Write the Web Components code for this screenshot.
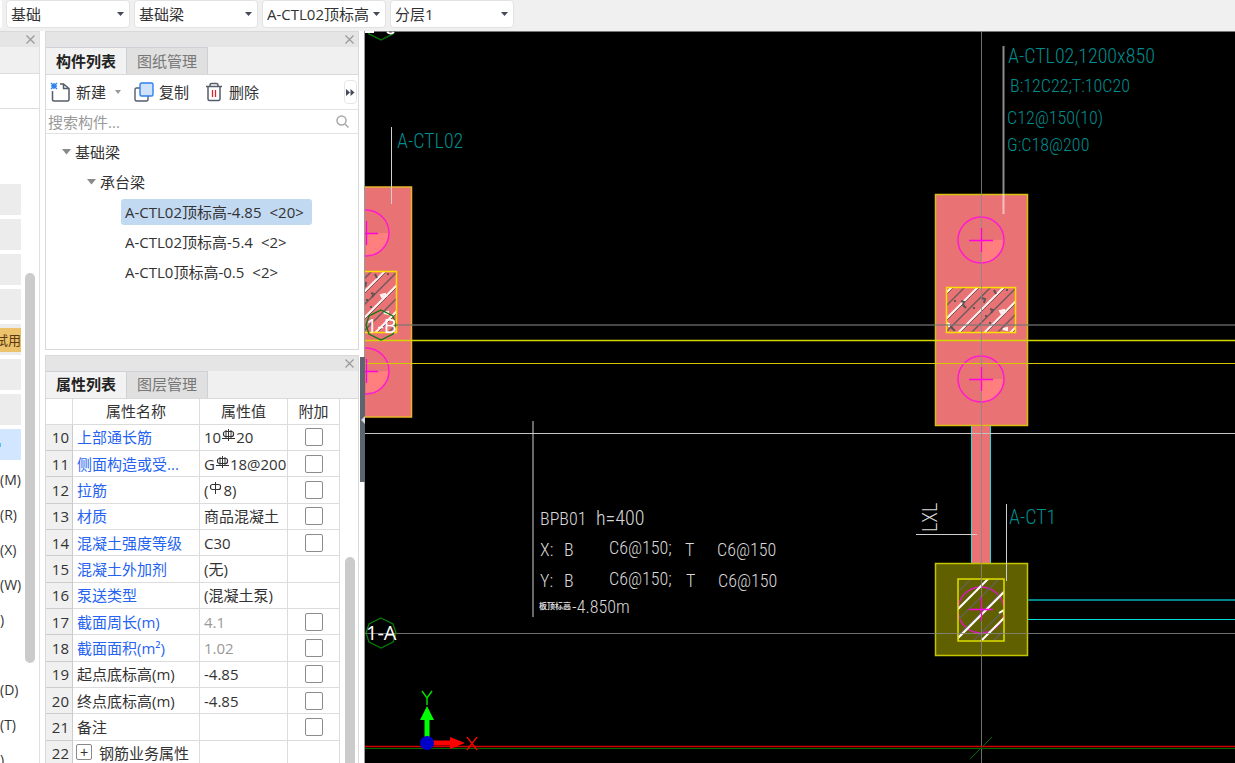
<!DOCTYPE html>
<html lang="zh-CN">
<head>
<meta charset="utf-8">
<title>基础梁</title>
<style>
  html, body { height: 100%; margin: 0; }
  body {
    font-family: "Open Sans", "Noto Sans CJK SC", sans-serif;
    font-size: 15px;
    line-height: 20px;
    color: #333;
    background: #fff;
    overflow: hidden;
  }
</style>
</head>
<body>
<modeling-app></modeling-app>

<script>
class PickList extends HTMLElement {
  constructor() {
    super();
    this.attachShadow({ mode: "open" });
  }

  connectedCallback() {
    const label = this.getAttribute("label") || "";
    const value = this.getAttribute("value") || "";
    this.shadowRoot.innerHTML = `
      <style>
        :host { display: grid; width: 124px; height: 28px; }
        select, svg { grid-area: 1 / 1; }
        select {
          appearance: none; width: 100%; margin: 0; padding: 0 14px 0 4px;
          font: inherit; color: inherit; background: #fff;
          border: 1px solid #e2e2e2; border-radius: 4px;
        }
        svg { justify-self: end; align-self: center; margin-right: 6px; pointer-events: none; }
      </style>
      <select aria-label="${label}"><option>${value}</option></select>
      <svg width="7" height="4" viewBox="0 0 7 4"><path d="M0 0h7L3.5 4z" fill="#444b57"/></svg>
    `;
  }
}

class TopBar extends HTMLElement {
  constructor() {
    super();
    this.attachShadow({ mode: "open" });
    this.shadowRoot.innerHTML = `
      <style>
        :host { display: flex; gap: 4px; height: 31px; background: #f0f0f0; }
        .stub { width: 2px; height: 28px; background: #fff; border-radius: 0 4px 4px 0; }
      </style>
      <div class="stub"></div>
      <pick-list label="构件类别" value="基础"></pick-list>
      <pick-list label="构件类型" value="基础梁"></pick-list>
      <pick-list label="构件" value="A-CTL02顶标高"></pick-list>
      <pick-list label="分层" value="分层1"></pick-list>
    `;
  }
}

// Grey strip with the close cross that tops every docked panel
class PanelStrip extends HTMLElement {
  constructor() {
    super();
    this.attachShadow({ mode: "open" });
    this.shadowRoot.innerHTML = `
      <style>
        :host { display: flex; flex: none; justify-content: flex-end; align-items: center; height: 15px; background: #e5e5e5; border-top: 1px solid #d9d9d9; }
        button { display: flex; padding: 0; margin-right: 4px; border: 0; background: none; }
      </style>
      <button type="button" aria-label="关闭"><svg width="9" height="9" viewBox="0 0 9 9"><path d="M.5.5l8 8M8.5.5l-8 8" stroke="#999" stroke-width="1.2"/></svg></button>
    `;
  }
}

class SideNav extends HTMLElement {
  constructor() {
    super();
    this.attachShadow({ mode: "open" });
    const tails = ["(M)", "(R)", "(X)", "(W)", ")", "", "(D)", "(T)", ")"];
    this.shadowRoot.innerHTML = `
      <style>
        :host { display: flex; flex-direction: column; flex: none; width: 39px; border-right: 1px solid #e0e0e0; overflow: hidden; }
        .head { flex: none; height: 26px; background: #f0f0f0; border-bottom: 1px solid #ddd; }
        .blank { flex: none; height: 34px; border-bottom: 1px solid #ddd; }
        .body { flex: 1; display: flex; min-height: 0; }
        ul { width: 21px; flex: none; margin: 0; padding: 75px 0 0; list-style: none; overflow: hidden; font-size: 14px; }
        li { display: flex; align-items: center; height: 31px; margin-bottom: 4px; white-space: nowrap; }
        .bar { background: #ececec; }
        .active { background: #d3e6ff; }
        .active i { width: 1px; height: 4px; background: #4fc3f7; }
        .trial { justify-content: flex-end; width: 100%; height: 24px; line-height: 24px; background: #edc26c; color: #5a3b10; display: flex; font-size: 13px; }
        .thumb { width: 10px; height: 390px; margin: 164px 0 0 4px; border-radius: 5px; background: #cbcbcb; }
      </style>
      <panel-strip></panel-strip>
      <div class="head"></div>
      <div class="blank"></div>
      <div class="body">
        <ul>
          <li class="bar"></li><li class="bar"></li><li class="bar"></li><li class="bar"></li>
          <li class="bar"><span class="trial">试用</span></li>
          <li class="bar"></li><li class="bar"></li>
          <li class="active"><i></i></li>
          ${tails.map((t) => `<li>${t}</li>`).join("")}
        </ul>
        <div class="thumb"></div>
      </div>
    `;
  }
}

class DockPanel extends HTMLElement {
  constructor() {
    super();
    this.attachShadow({ mode: "open" });
  }

  connectedCallback() {
    const [first, second] = (this.getAttribute("tabs") || "").split(",");
    this.shadowRoot.innerHTML = `
      <style>
        :host { display: flex; flex-direction: column; min-height: 0; box-sizing: border-box; border: 1px solid #d9d9d9; border-top: 0; }
        .tabs { display: flex; flex: none; height: 27px; background: #f0f0f0; border-bottom: 1px solid #d9d9d9; }
        button {
          width: 81px; padding: 0 0 1px; font: inherit; color: #777; background: #e0e0e0;
          border: 0; border-top: 1px solid #cdd1d6; border-right: 1px solid #cdd1d6;
        }
        button[aria-selected="true"] { color: #222; font-weight: 600; background: #f2f2f2; }
        .body { display: flex; flex-direction: column; flex: 1; min-height: 0; overflow: hidden; }
      </style>
      <panel-strip></panel-strip>
      <div class="tabs" role="tablist">
        <button type="button" role="tab" aria-selected="true">${first}</button>
        <button type="button" role="tab" aria-selected="false">${second}</button>
      </div>
      <div class="body"><slot></slot></div>
    `;
  }
}

class ComponentList extends HTMLElement {
  constructor() {
    super();
    this.attachShadow({ mode: "open" });
    const caret = `<svg width="9" height="6" viewBox="0 0 9 6"><path d="M0 0h9L4.500 5.500z" fill="#8a8a8a"/></svg>`;
    const leaves = [
      ["A-CTL02顶标高-4.85", "&lt;20&gt;"],
      ["A-CTL02顶标高-5.4", "&lt;2&gt;"],
      ["A-CTL0顶标高-0.5", "&lt;2&gt;"],
    ];
    this.shadowRoot.innerHTML = `
      <style>
        :host { display: flex; flex-direction: column; flex: 1; min-height: 0; }
        .tools { display: flex; align-items: center; flex: none; height: 34px; padding: 0 1px 0 4px; border-bottom: 1px solid #e2e2e2; }
        .tools button { display: flex; align-items: center; gap: 5px; padding: 0; border: 0; background: none; font: inherit; color: inherit; }
        .tools .copy { margin: 0 16px 0 13px; }
        .tools .del { gap: 6px; }
        .tools .new svg:last-child { margin-left: 4px; }
        .tools .more { justify-content: center; width: 13px; height: 24px; margin-left: auto; border: 1px solid #e6e6e6; border-radius: 4px; }
        label { display: flex; align-items: center; flex: none; height: 23px; padding: 0 9px 0 2px; border-bottom: 1px solid #e2e2e2; }
        input { flex: 1; min-width: 0; padding: 0; border: 0; outline: 0; font: inherit; color: inherit; }
        input::placeholder { color: #999; opacity: 1; }
        ul { margin: 0; padding: 0; list-style: none; }
        .tree { padding: 3px 0 0 16px; }
        .node { display: flex; align-items: center; gap: 4px; height: 30px; }
        .kids { padding-left: 25px; }
        .leaves { padding-left: 34px; }
        .leaf { display: flex; align-items: center; height: 30px; }
        .leaf span { display: flex; gap: 8px; padding: 3px 8px 3px 4px; border-radius: 3px; }
        .picked span { background: #c2d9f2; }
      </style>
      <div class="tools">
        <button type="button" class="new">
          <svg width="21" height="20" viewBox="0 0 21 20" fill="none">
            <path d="M2.500 9v8.500q0 1.500 1.500 1.500h13.500q1.500 0 1.500-1.500V6.500L13.500 2H10M13.500 2v4.500H19" stroke="#555d6b" stroke-width="1.500"/>
            <path d="M1 1l6 6M7 1L1 7M4 1v6M1 4h6" stroke="#2f86ee" stroke-width="1.400"/>
          </svg>新建
          <svg width="6" height="4" viewBox="0 0 6 4"><path d="M0 0h6L3 4z" fill="#999"/></svg>
        </button>
        <button type="button" class="copy">
          <svg width="20" height="20" viewBox="0 0 20 20">
            <path d="M6 6H2.500Q1 6 1 7.500v10Q1 19 2.500 19h10q1.500 0 1.500-1.500V14" fill="none" stroke="#555d6b" stroke-width="1.400"/>
            <rect x="6" y="1" width="13" height="13" rx="1.500" fill="#cfe2fb" stroke="#2f80ed" stroke-width="1.400"/>
          </svg>复制
        </button>
        <button type="button" class="del">
          <svg width="18" height="20" viewBox="0 0 18 20" fill="none">
            <path d="M1 4.500h16M5 4.500V3q0-1.500 1.500-1.500h5Q13 1.500 13 3v1.500M3 4.500v12.500q0 1.500 1.500 1.500h9q1.500 0 1.500-1.500V4.500" stroke="#555d6b" stroke-width="1.500"/>
            <path d="M7.500 8v7M10.500 8v7" stroke="#e0242f" stroke-width="1.300"/>
          </svg>删除
        </button>
        <button type="button" class="more" aria-label="更多"><svg width="9" height="7" viewBox="0 0 9 7"><path d="M0 0v7l4-3.500zM4.500 0v7l4-3.500z" fill="#444b57"/></svg></button>
      </div>
      <label>
        <input type="text" placeholder="搜索构件..." aria-label="搜索构件">
        <svg width="13" height="13" viewBox="0 0 13 13" fill="none" stroke="#aaa" stroke-width="1.500"><circle cx="5.500" cy="5.500" r="4.500"/><path d="M9 9l3.500 3.500"/></svg>
      </label>
      <ul class="tree" role="tree">
        <li role="treeitem">
          <div class="node">${caret}基础梁</div>
          <ul class="kids" role="group">
            <li role="treeitem">
              <div class="node">${caret}承台梁</div>
              <ul class="leaves" role="group">
                ${leaves.map(([t, n], i) => `<li role="treeitem" class="leaf${i ? "" : " picked"}"><span>${t} <b style="font-weight:400">${n}</b></span></li>`).join("")}
              </ul>
            </li>
          </ul>
        </li>
      </ul>
    `;
  }
}

class PropertyTable extends HTMLElement {
  constructor() {
    super();
    this.attachShadow({ mode: "open" });
    this.render();
  }

  // Rebar grade marks: flat ring crossed by one or three bars
  rebar(bars) {
    const d = bars === 3 ? "M6.500 0v12M4 1v9M9 1v9M0 9.500h13" : "M6.500 0v12";
    return `<svg width="13" height="12" viewBox="0 0 13 12" fill="none" stroke="#333"><rect x="1.500" y="2.500" width="10" height="5" rx="2" stroke-width="1.200"/><path d="${d}"/></svg>`;
  }

  render() {
    // name, value, name colour class, value class, has checkbox
    const rows = [
      ["上部通长筋", `10${this.rebar(3)}20`, "key", "", true],
      ["侧面构造或受...", `G${this.rebar(3)}18@200`, "key", "", true],
      ["拉筋", `(${this.rebar(1)}8)`, "key", "", true],
      ["材质", "商品混凝土", "key", "", true],
      ["混凝土强度等级", "C30", "key", "", true],
      ["混凝土外加剂", "(无)", "key", "", false],
      ["泵送类型", "(混凝土泵)", "key", "", false],
      ["截面周长(m)", "4.1", "key", "dim", true],
      ["截面面积(m²)", "1.02", "key", "dim", true],
      ["起点底标高(m)", "-4.85", "", "", true],
      ["终点底标高(m)", "-4.85", "", "", true],
      ["备注", "", "", "", true],
      ['<button type="button" aria-label="展开">+</button>钢筋业务属性', "", "", "", false],
    ];
    this.shadowRoot.innerHTML = `
      <style>
        :host { display: flex; flex: 1; min-height: 0; }
        table { width: 294px; height: calc(100% + 4px); flex: none; table-layout: fixed; border-collapse: separate; border-spacing: 0; }
        th, td { height: 25px; padding: 0 0 0 4px; border-right: 1px solid #dcdcdc; border-bottom: 1px solid #dcdcdc; text-align: left; font-weight: 400; white-space: nowrap; overflow: hidden; }
        thead th { padding: 0; text-align: center; }
        tbody th { background: #f0f0f0; border-color: #ccc; padding: 0 3px 0 0; text-align: right; }
        .key { color: #2563f0; }
        .dim { color: #999; }
        .check { padding: 0; text-align: center; }
        input { appearance: none; display: block; box-sizing: border-box; width: 18px; height: 18px; margin: 0 auto; border: 1px solid #8c8c8c; border-radius: 2px; background: #fff; }
        td svg { margin: 0 1px; vertical-align: 2px; }
        td button { width: 16px; height: 16px; margin: 0 7px 0 -1px; padding: 0; line-height: 12px; font-size: 14px; border: 1px solid #888; border-radius: 2px; background: #fff; color: #333; vertical-align: 2px; }
        .track { flex: 1; display: flex; }
        .thumb { width: 10px; margin: 158px 0 0 5px; border-radius: 5px 5px 0 0; background: #cbcbcb; }
      </style>
      <table>
        <colgroup><col style="width:27px"><col style="width:127px"><col style="width:88px"><col style="width:52px"></colgroup>
        <thead><tr><th></th><th>属性名称</th><th>属性值</th><th>附加</th></tr></thead>
        <tbody>
          ${rows
            .map(
              ([name, value, nameCls, valueCls, check], i) => `
            <tr>
              <th scope="row">${i + 10}</th>
              <td class="${nameCls}">${name}</td>
              <td class="${valueCls}">${value}</td>
              <td class="check">${check ? `<input type="checkbox" aria-label="附加 ${i + 10}">` : ""}</td>
            </tr>`
            )
            .join("")}
        </tbody>
      </table>
      <div class="track"><div class="thumb"></div></div>
    `;
  }
}

class CadView extends HTMLElement {
  constructor() {
    super();
    this.attachShadow({ mode: "open" });
    this.render();
  }

  // Pile mark: circle, cross and lit lower right quadrant
  pile(x, y) {
    return `
      <path d="M${x} ${y}h23a23 23 0 0 1-23 23z" fill="#ff7f7f"/>
      <circle cx="${x}" cy="${y}" r="23" stroke="#ff1ad1" stroke-width="1.500"/>`;
  }

  cross(x, y) {
    return `<path d="M${x - 12} ${y + 0.5}h24M${x + 0.5} ${y - 12}v24" stroke="#ff00e0" stroke-width="1.300"/>`;
  }

  // Column section filled with reinforced concrete hatching
  column(id, x, y, w, h) {
    let strokes = "";
    for (let i = 0, c = 6; c < w + h; i++, c += 13) {
      const white = i % 2 === 0;
      strokes += `<path d="M${x + c} ${y}l${-h} ${h}" stroke="${white ? "#fff0f0" : "#705a5c"}" stroke-width="${white ? 2 : 1.5}"/>`;
      if (white) strokes += `<path d="M${x + c + 2} ${y}l${-h} ${h}" stroke="#705a5c"/>`;
    }
    return `
      <clipPath id="${id}"><rect x="${x}" y="${y}" width="${w}" height="${h}"/></clipPath>
      <g clip-path="url(#${id})">${strokes}
        <path d="M${x + 15} ${y + 14}l3 1-1 3 3 3M${x + 35} ${y + 11}l4 1-1 4M${x + 44} ${y + 22}l3 1-2 3M${x + 4} ${y + 39}l3 3 2 2M${x + 48} ${y + 3}l2 4" stroke="#5d5557" stroke-width="2"/>
        <path d="M${x + 8} ${y + 14}h2M${x + 27} ${y + 21}h2M${x + 39} ${y + 29}h2M${x + 43} ${y + 36}h2M${x + 60} ${y + 3}h2" stroke="#5d5557" stroke-width="2"/>
        <path d="M${x + 54} ${y + 24}l4-1 1 2-4 1zM${x + 1} ${y + 36}l2 1v3M${x + 57} ${y + 42}l4-1v2z" stroke="#fff0f0" stroke-width="2"/>
      </g>
      <rect x="${x + 0.5}" y="${y + 0.5}" width="${w - 1}" height="${h - 1}" stroke="#ffe000" stroke-width="1.500"/>`;
  }

  render() {
    this.shadowRoot.innerHTML = `
      <style>
        :host { display: block; min-width: 0; background: #000; overflow: hidden; }
        svg { display: block; width: 100%; height: 100%; }
        text { font-family: "Roboto Condensed", "Liberation Sans Narrow", "Noto Sans CJK SC", sans-serif; font-size: 18px; font-weight: 300; fill: #d8d8d8; white-space: pre; }
        .teal { fill: #008c8c; }
        .title { font-size: 20px; }
        .axis { font-family: "Open Sans", sans-serif; font-size: 20px; font-weight: 400; fill: #fff; }
        .tiny { font-size: 8px; font-weight: 700; }
      </style>
      <svg fill="none">
        <g transform="translate(-365 -31)">
          <path d="M365 31.500h2000" stroke="#777"/>
          <path d="M368 31l1 3 12 6 12-6 1-3" stroke="#0a6a0a" stroke-width="1.500"/>
          <path d="M365 32h9M387 32q4 3 7 0" stroke="#fff" stroke-width="2"/>

          <!-- footings and tie beam -->
          <rect x="319.500" y="187" width="92" height="230" fill="#e97374" stroke="#e8b52c" stroke-width="1.500"/>
          <rect x="935.500" y="194.500" width="92" height="231" fill="#e97374" stroke="#d8c010" stroke-width="1.500"/>
          <rect x="972" y="426" width="18" height="137" fill="#e97374"/>
          <path d="M971.500 426v137M990.500 426v137" stroke="#1fdede"/>
          <rect x="935.500" y="563.500" width="92" height="92" fill="#606000" stroke="#c4c400" stroke-width="1.500"/>

          ${this.pile(366, 233)}
          ${this.pile(366, 371)}
          ${this.pile(981, 240)}
          ${this.pile(981, 379)}
          ${this.column("left-col", 327, 271, 70, 62)}
          ${this.column("right-col", 946, 287, 70, 46)}

          <!-- isolated cap column -->
          <clipPath id="cap"><rect x="958" y="579" width="46" height="62"/></clipPath>
          <g clip-path="url(#cap)">
            <circle cx="981" cy="610" r="23" stroke="#d81ab8" stroke-width="1.500"/>
            <path d="M976 574l-24 24M1004 574l-56 56M1014 580l-62 62M1014 600l-46 46M1014 620l-24 24" stroke="#666052" stroke-width="1.500"/>
            <path d="M990 577l-36 36M1008 588l-54 54M1008 614l-30 30M999 613l5-3v5" stroke="#fff" stroke-width="2"/>
          </g>
          <rect x="958" y="579" width="46" height="62" stroke="#dede00" stroke-width="1.500"/>

          <!-- grid axes and beam outlines -->
          <path d="M397 325h2000" stroke="#777" stroke-opacity=".6" stroke-width="2"/>
          <path d="M365 340.500h2000" stroke="#d6d600" stroke-width="1.500"/>
          <path d="M365 363.500h2000" stroke="#d6c800" stroke-width="1.200"/>
          <path d="M365 433.500h2000" stroke="#c4c4c4"/>
          <path d="M365 633.500h2000M981.500 31v2000" stroke="#888" stroke-opacity=".8"/>
          <path d="M1028 600h2000" stroke="#008888" stroke-width="2"/>
          <path d="M1028 619.500h2000" stroke="#00dede" stroke-width="1.200"/>
          <path d="M365 746.500h2000" stroke="#d00000" stroke-width="1.500"/>
          <path d="M365 748.500h2000M970 759l22-22" stroke="#006a00"/>

          ${this.cross(366, 233)}
          ${this.cross(366, 371)}
          ${this.cross(981, 240)}
          ${this.cross(981, 379)}
          ${this.cross(981, 609)}

          <!-- leaders -->
          <path d="M391.500 127v77M533 421v196M1006.500 504v77M916 534.500h61" stroke="#d0d0d0"/>
          <path d="M1003.500 46v168" stroke="#fff" stroke-opacity=".55" stroke-width="2"/>

          <g class="labels">
            <text class="teal title" x="397" y="148">A-CTL02</text>
            <text class="teal title" x="1008" y="63">A-CTL02,1200x850</text>
            <text class="teal" x="1010" y="92">B:12C22;T:10C20</text>
            <text class="teal" x="1007" y="124">C12@150(10)</text>
            <text class="teal" x="1007" y="151">G:C18@200</text>
            <text class="teal title" x="1009" y="524">A-CT1</text>
            <text class="title" transform="translate(937 532) rotate(-90)">LXL</text>
            <text x="540" y="525">BPB01</text><text class="title" x="596" y="525">h=400</text>
            <text x="540" y="556">X:</text><text x="564" y="556">B</text><text x="609" y="554">C6@150;</text><text x="685" y="556">T</text><text x="717" y="556">C6@150</text>
            <text x="540" y="587">Y:</text><text x="564" y="587">B</text><text x="609" y="585">C6@150;</text><text x="686" y="587">T</text><text x="718" y="587">C6@150</text>
            <text class="tiny" x="539" y="609">板顶标高</text><text x="572" y="613">-4.850m</text>
          </g>

          <path d="M381 310l12 6 3 9-3 9-12 6-12-6-3-9 3-9zM381 618l12 6 3 9-3 9-12 6-12-6-3-9 3-9z" stroke="#0a7a0a" stroke-width="1.300"/>
          <text class="axis" x="366" y="333">1-B</text>
          <text class="axis" x="366" y="640">1-A</text>

          <!-- origin triad -->
          <path d="M427 706l7 14h-4.500v20h-5v-20h-4.500z" fill="#0f0"/>
          <path d="M465 743l-15 6v-3.500h-18v-5h18v-3.500z" fill="#f00"/>
          <circle cx="427" cy="743" r="7" fill="#0000c8"/>
          <path d="M422 691l5 7 5-7M427 698v7" stroke="#0d0" stroke-width="1.500"/>
          <path d="M467 737l10 13M477 737l-10 13" stroke="#f00" stroke-width="1.300"/>
        </g>
      </svg>
    `;
  }
}

class ModelingApp extends HTMLElement {
  constructor() {
    super();
    this.attachShadow({ mode: "open" });
    this.shadowRoot.innerHTML = `
      <style>
        :host { display: flex; flex-direction: column; height: 100vh; }
        main { flex: 1; display: flex; min-height: 0; }
        .docks { display: flex; flex-direction: column; gap: 5px; flex: none; width: 314px; margin-left: 5px; min-height: 0; }
        .docks :first-child { flex: 318; }
        .docks :last-child { flex: 409; border-bottom: 0; }
        .splitter { display: flex; flex-direction: column; flex: none; width: 5px; margin-left: 1px; border-right: 1px solid #999; box-sizing: border-box; }
        .grip { display: flex; align-items: center; height: 125px; margin: 326px -1px 0 0; padding: 0; border: 0; background: #5c6470; }
        cad-view { flex: 1; }
      </style>
      <top-bar></top-bar>
      <main>
        <side-nav></side-nav>
        <div class="docks">
          <dock-panel tabs="构件列表,图纸管理"><component-list></component-list></dock-panel>
          <dock-panel tabs="属性列表,图层管理"><property-table></property-table></dock-panel>
        </div>
        <div class="splitter"><button type="button" class="grip" aria-label="收起面板"><svg width="5" height="8" viewBox="0 0 5 8"><path d="M5 0v8L1 4z" fill="#d5d8dc"/></svg></button></div>
        <cad-view></cad-view>
      </main>
    `;
  }
}

customElements.define("pick-list", PickList);
customElements.define("top-bar", TopBar);
customElements.define("panel-strip", PanelStrip);
customElements.define("side-nav", SideNav);
customElements.define("dock-panel", DockPanel);
customElements.define("component-list", ComponentList);
customElements.define("property-table", PropertyTable);
customElements.define("cad-view", CadView);
customElements.define("modeling-app", ModelingApp);
</script>
</body>
</html>
